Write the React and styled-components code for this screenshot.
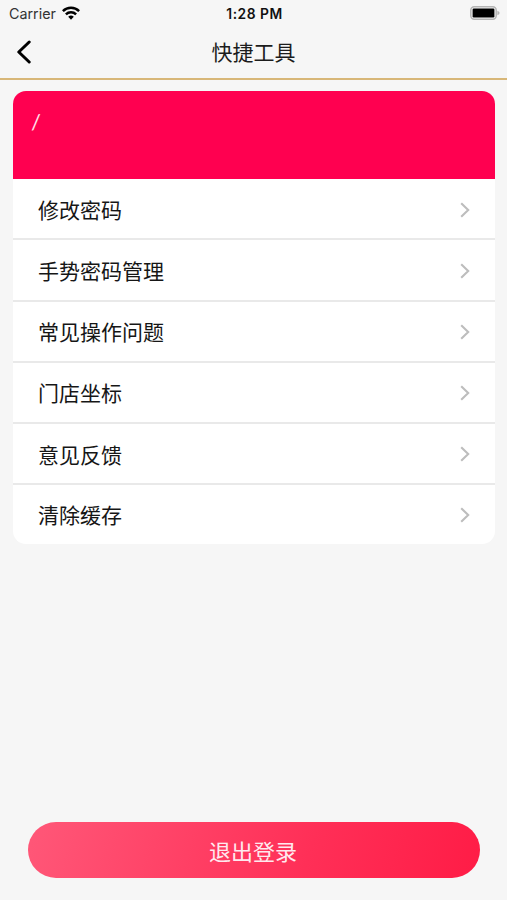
import React from 'react';
import styled, { createGlobalStyle } from 'styled-components';

const GlobalStyle = createGlobalStyle`
	* {
		box-sizing: border-box;
	}
	body {
		margin: 0;
		background: #f6f6f6;
		font-family: 'Liberation Sans', 'Noto Sans CJK SC', sans-serif;
	}
`;

const Screen = styled.div`
	display: flex;
	flex-direction: column;
	height: 900px;
	overflow: hidden;
	background: #f6f6f6;
`;

const StatusBar = styled.div`
	display: grid;
	grid-template-columns: 1fr auto 1fr;
	align-items: center;
	height: 27px;
	padding: 0 7px 0 9px;
	font-family: Inter, sans-serif;
	font-size: 14px;
	line-height: 25px;
`;

const Carrier = styled.div`
	display: flex;
	align-items: center;
	gap: 6px;
	color: #333;
	font-size: 14.3px;

	svg {
		margin-bottom: 1px;
	}
`;

const Clock = styled.div`
	padding-top: 1px;
	color: #111;
	font-weight: 600;
	font-size: 13.8px;
	letter-spacing: 0.5px;
`;

const BatterySlot = styled.div`
	display: flex;
	justify-content: flex-end;
	padding-bottom: 1px;
`;

const NavBar = styled.header`
	display: grid;
	grid-template-columns: 60px 1fr 60px;
	align-items: center;
	height: 53px;
	padding-bottom: 1px;
	border-bottom: 2px solid #d8b778;
`;

const BackButton = styled.button`
	display: flex;
	align-items: center;
	height: 40px;
	padding: 0 0 0 16px;
	border: 0;
	background: none;
`;

const NavTitle = styled.h1`
	margin: 0;
	padding-top: 2px;
	color: #1c1c1c;
	font-size: 21px;
	font-weight: 400;
	line-height: 40px;
	text-align: center;
`;

const Card = styled.section`
	height: 453px;
	margin: 11px 12px 0 13px;
	border-radius: 13px;
	background: #fff;
	overflow: hidden;
`;

const Banner = styled.div`
	height: 88px;
	padding: 17px 18px;
	background: #ff0050;
	color: #ffe0e9;
	font-family: Lato, sans-serif;
	font-size: 22px;
	line-height: 27px;
`;

const MenuRow = styled.div`
	display: flex;
	align-items: center;
	justify-content: space-between;
	height: 61.3px;
	padding: 1.2px 25px 0;
	border-bottom: 2px solid #e9e9e9;

	&:nth-child(2) {
		padding-top: 2px;
	}

	&:last-child {
		height: 59px;
		padding-top: 0.5px;
		border-bottom: 0;
	}
`;

const Label = styled.span`
	padding-top: 2.2px;
	color: #161616;
	font-size: 21px;
	line-height: 30px;
`;

const LogoutButton = styled.button`
	height: 56px;
	margin: auto 27px 22px 28px;
	padding: 0 2px 1px 0;
	border: 0;
	border-radius: 28px;
	background: linear-gradient(105deg, #ff5677 2%, #ff2f57 62%, #ff1c46 100%);
	color: #ffe9ee;
	font-family: inherit;
	font-size: 22px;
`;

const items = ['修改密码', '手势密码管理', '常见操作问题', '门店坐标', '意见反馈', '清除缓存'];

const WifiIcon = () => (
	<svg width="18" height="14" viewBox="0 0 18 14" fill="none" stroke="#000" strokeWidth="2.5">
		<path d="M.9 5.1a11.6 11.6 0 0 1 16.2 0" />
		<path d="M3.9 8.3a7.3 7.3 0 0 1 10.2 0" />
		<path d="M9 13.7 6.2 10.8a4 4 0 0 1 5.6 0Z" fill="#000" stroke="none" />
	</svg>
);

const BatteryIcon = () => (
	<svg width="30" height="14" viewBox="0 0 30 14">
		<rect x=".8" y=".8" width="25.4" height="12.4" rx="3.4" fill="#f6f6f6" stroke="#b5b5b5" strokeWidth="1.5" />
		<rect x="2.6" y="2.6" width="21.8" height="8.8" rx="1.2" fill="#000" />
		<path d="M27.4 4.8q2.2.8 2.2 2.2t-2.2 2.2Z" fill="#b5b5b5" />
	</svg>
);

const BackIcon = () => (
	<svg width="16" height="24" viewBox="0 0 16 24" fill="none" stroke="#000" strokeWidth="3" strokeLinecap="round" strokeLinejoin="round">
		<path d="M13.2 2 2.8 12l10.4 10" />
	</svg>
);

const ArrowIcon = () => (
	<svg width="10" height="16" viewBox="0 0 10 16" fill="none" stroke="#bdbdbd" strokeWidth="2.1">
		<path d="m1.2 1.2 7 6.8-7 6.8" />
	</svg>
);

const App = () => {
	return (
		<Screen>
			<GlobalStyle />
			<StatusBar>
				<Carrier>
					Carrier
					<WifiIcon />
				</Carrier>
				<Clock>1:28 PM</Clock>
				<BatterySlot>
					<BatteryIcon />
				</BatterySlot>
			</StatusBar>
			<NavBar>
				<BackButton aria-label="返回">
					<BackIcon />
				</BackButton>
				<NavTitle>快捷工具</NavTitle>
			</NavBar>
			<Card>
				<Banner>/</Banner>
				{items.map((item) => (
					<MenuRow key={item}>
						<Label>{item}</Label>
						<ArrowIcon />
					</MenuRow>
				))}
			</Card>
			<LogoutButton>退出登录</LogoutButton>
		</Screen>
	);
};
export default App;
